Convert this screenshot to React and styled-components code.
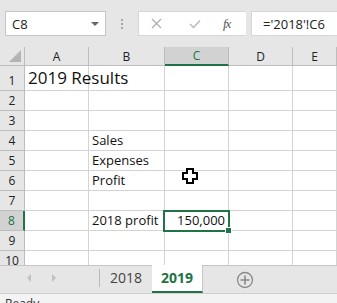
import React from "react";
import styled, { createGlobalStyle } from "styled-components";

const GREEN = "#217346";
const GRID = "#d4d4d4";

const GlobalStyle = createGlobalStyle`
  html, body { margin: 0; padding: 0; }
  body {
    width: 337px;
    height: 303px;
    overflow: hidden;
    background: #ffffff;
    font-family: "Open Sans", "Liberation Sans", sans-serif;
  }
`;

const Window = styled.div`
  width: 337px;
  height: 303px;
  display: flex;
  flex-direction: column;
  overflow: hidden;
  & > * {
    flex-shrink: 0;
  }
`;

const FormulaBar = styled.div`
  height: 47px;
  background: #e6e6e6;
  display: flex;
  align-items: center;
  padding: 0 0 0 5px;
  box-sizing: border-box;
`;

const NameBox = styled.div`
  width: 101px;
  height: 25px;
  background: #fff;
  border: 1px solid #c6c6c6;
  box-sizing: border-box;
  display: flex;
  align-items: center;
  justify-content: space-between;
  padding: 0 6px 0 6px;
  font-size: 13px;
  color: #222;
`;

const Caret = styled.span`
  width: 0;
  height: 0;
  border-left: 4px solid transparent;
  border-right: 4px solid transparent;
  border-top: 4px solid #666;
`;

const Grip = styled.div`
  width: 32px;
  display: flex;
  flex-direction: column;
  align-items: center;
  gap: 2px;
  span {
    width: 2px;
    height: 2px;
    background: #a6a6a6;
  }
`;

const ActionBox = styled.div`
  width: 108px;
  height: 25px;
  background: #fff;
  border: 1px solid #d6d6d6;
  border-right: none;
  box-sizing: border-box;
  display: flex;
  align-items: center;
  padding-left: 12px;
`;

const ActionIcon = styled.div`
  width: ${(p) => p.$w}px;
  display: flex;
  align-items: center;
`;

const Fx = styled.span`
  font-family: "Liberation Serif", serif;
  font-style: italic;
  font-size: 13px;
  color: #555;
  letter-spacing: -1px;
`;

const FormulaInput = styled.div`
  flex: 1;
  height: 25px;
  margin-left: 5px;
  background: #fff;
  border: 1px solid #d6d6d6;
  border-right: none;
  box-sizing: border-box;
  display: flex;
  align-items: center;
  padding-left: 11px;
  font-size: 13px;
  color: #222;
`;

const Sheet = styled.div`
  position: relative;
  display: grid;
  grid-template-columns: 25px 64px 76px 64px 64px 44px;
  grid-template-rows: 19px 25px repeat(9, 20px);
  grid-auto-rows: 20px;
  height: 218px;
  overflow: hidden;
  background: #fff;
`;

const Corner = styled.div`
  background: #e6e6e6;
  border-right: 1px solid #bdbdbd;
  border-bottom: 1px solid #bdbdbd;
  box-sizing: border-box;
  position: relative;
  &::after {
    content: "";
    position: absolute;
    right: 3px;
    bottom: 3px;
    width: 0;
    height: 0;
    border-left: 12px solid transparent;
    border-bottom: 12px solid #b4b4b4;
  }
`;

const ColHead = styled.div`
  background: ${(p) => (p.$active ? "#d2d2d2" : "#e6e6e6")};
  color: ${(p) => (p.$active ? GREEN : "#222")};
  border-right: 1px solid #bdbdbd;
  border-bottom: ${(p) => (p.$active ? `2px solid ${GREEN}` : "1px solid #bdbdbd")};
  box-sizing: border-box;
  display: flex;
  align-items: center;
  justify-content: center;
  font-size: 12px;
`;

const RowHead = styled.div`
  background: ${(p) => (p.$active ? "#d2d2d2" : "#e6e6e6")};
  color: ${(p) => (p.$active ? GREEN : "#222")};
  border-bottom: 1px solid #bdbdbd;
  border-right: ${(p) => (p.$active ? `2px solid ${GREEN}` : "1px solid #bdbdbd")};
  box-sizing: border-box;
  display: flex;
  align-items: flex-end;
  justify-content: center;
  padding-bottom: 1px;
  font-size: 12px;
`;

const Cell = styled.div`
  border-right: 1px solid ${GRID};
  border-bottom: 1px solid ${GRID};
  box-sizing: border-box;
  display: flex;
  align-items: flex-end;
  justify-content: ${(p) => (p.$right ? "flex-end" : "flex-start")};
  padding: 0 3px 1px 3px;
  font-size: ${(p) => (p.$big ? "17px" : "13px")};
  color: #111;
  white-space: nowrap;
  overflow: visible;
  position: relative;
  z-index: ${(p) => (p.$big ? 1 : 0)};
`;

const Selection = styled.div`
  position: absolute;
  left: 163px;
  top: 163px;
  width: 67px;
  height: 22px;
  border: 2px solid ${GREEN};
  box-sizing: border-box;
  pointer-events: none;
  &::after {
    content: "";
    position: absolute;
    right: -4px;
    bottom: -4px;
    width: 5px;
    height: 5px;
    background: ${GREEN};
    border: 1px solid #fff;
  }
`;

const Cursor = styled.svg`
  position: absolute;
  left: 182px;
  top: 121px;
`;

const TabBar = styled.div`
  height: 28px;
  background: #e6e6e6;
  border-top: 1px solid #c6c6c6;
  box-sizing: border-box;
  display: flex;
  align-items: stretch;
`;

const Nav = styled.div`
  width: 100px;
  display: flex;
  align-items: center;
  padding-left: 27px;
  gap: 21px;
  box-sizing: border-box;
  border-right: 1px solid #b8b8b8;
  margin: 3px 0 6px;
`;

const NavArrow = styled.span`
  width: 0;
  height: 0;
  border-top: 4px solid transparent;
  border-bottom: 4px solid transparent;
  ${(p) => (p.$left ? "border-right: 4px solid #c0c0c0;" : "border-left: 4px solid #c0c0c0;")}
`;

const Tab = styled.div`
  width: ${(p) => p.$w}px;
  display: flex;
  align-items: center;
  justify-content: center;
  font-size: 14px;
  font-weight: ${(p) => (p.$active ? 700 : 400)};
  color: ${(p) => (p.$active ? GREEN : "#444")};
  background: ${(p) => (p.$active ? "#fff" : "transparent")};
  border-bottom: ${(p) => (p.$active ? `2px solid ${GREEN}` : "2px solid transparent")};
  border-right: ${(p) => (p.$active ? "1px solid #c6c6c6" : "none")};
  margin-top: -1px;
  box-sizing: border-box;
  padding-bottom: 2px;
`;

const AddTab = styled.div`
  width: 84px;
  display: flex;
  align-items: center;
  justify-content: center;
`;

const StatusBar = styled.div`
  height: 10px;
  overflow: visible;
  background: #f3f3f3;
  border-top: 1px solid #d0d0d0;
  font-size: 12px;
  line-height: 14px;
  color: #333;
  padding: 3px 0 0 5px;
`;

const columns = ["A", "B", "C", "D", "E"];

const data = {
  "1-A": { text: "2019 Results", big: true },
  "4-B": { text: "Sales" },
  "5-B": { text: "Expenses" },
  "6-B": { text: "Profit" },
  "8-B": { text: "2018 profit" },
  "8-C": { text: "150,000", right: true },
};

export default function App() {
  const rows = Array.from({ length: 10 }, (_, i) => i + 1);
  return (
    <Window>
      <GlobalStyle />
      <FormulaBar>
        <NameBox>
          C8
          <Caret />
        </NameBox>
        <Grip>
          <span />
          <span />
          <span />
        </Grip>
        <ActionBox>
          <ActionIcon $w={38}>
            <svg width="11" height="11" viewBox="0 0 11 11">
              <path d="M1 1 L10 10 M10 1 L1 10" stroke="#b0b0b0" strokeWidth="1.4" />
            </svg>
          </ActionIcon>
          <ActionIcon $w={34}>
            <svg width="12" height="10" viewBox="0 0 12 10">
              <path d="M1 5 L4.5 8.5 L11 1.5" stroke="#b8b8b8" strokeWidth="1.4" fill="none" />
            </svg>
          </ActionIcon>
          <ActionIcon $w={20}>
            <Fx>fx</Fx>
          </ActionIcon>
        </ActionBox>
        <FormulaInput>='2018'!C6</FormulaInput>
      </FormulaBar>

      <Sheet>
        <Corner />
        {columns.map((c) => (
          <ColHead key={c} $active={c === "C"}>
            {c}
          </ColHead>
        ))}
        {rows.map((r) => (
          <React.Fragment key={r}>
            <RowHead $active={r === 8}>{r}</RowHead>
            {columns.map((c) => {
              const d = data[`${r}-${c}`];
              return (
                <Cell key={c} $big={d && d.big} $right={d && d.right}>
                  {d ? d.text : ""}
                </Cell>
              );
            })}
          </React.Fragment>
        ))}
        <Selection />
        <Cursor width="16" height="16" viewBox="0 0 16 16">
          <path
            d="M5 1 H11 V5 H15 V11 H11 V15 H5 V11 H1 V5 H5 Z"
            fill="#fff"
            stroke="#000"
            strokeWidth="2"
          />
        </Cursor>
      </Sheet>

      <TabBar>
        <Nav>
          <NavArrow $left />
          <NavArrow />
        </Nav>
        <Tab $w={52}>2018</Tab>
        <Tab $w={51} $active>
          2019
        </Tab>
        <AddTab>
          <svg width="18" height="18" viewBox="0 0 18 18">
            <circle cx="9" cy="9" r="7.5" fill="none" stroke="#8a8a8a" strokeWidth="1.3" />
            <path d="M9 4.5 V13.5 M4.5 9 H13.5" stroke="#8a8a8a" strokeWidth="1.6" />
          </svg>
        </AddTab>
      </TabBar>
      <StatusBar>Ready</StatusBar>
    </Window>
  );
}
